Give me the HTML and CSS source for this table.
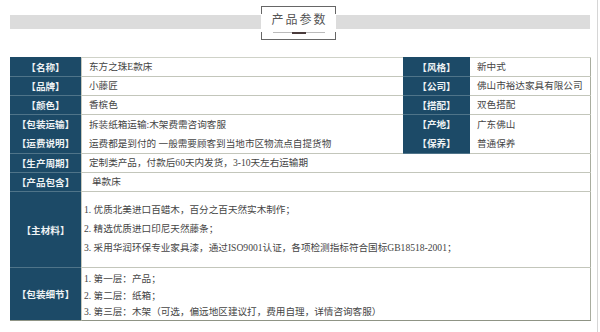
FILE: index.html
```html
<!DOCTYPE html>
<html lang="zh-CN">
<head>
<meta charset="utf-8">
<title>产品参数</title>
<link rel="stylesheet" href="styles.css">
</head>
<body>
<div class="page">
  <header class="head">
    <div class="title-box">
      <span class="title">产品参数</span>
      <span class="rule"><span class="rule-mark"></span></span>
    </div>
  </header>

  <section class="spec">
    <div class="lab r1">【名称】</div>
    <div class="val r1">东方之珠E款床</div>
    <div class="lab r1">【风格】</div>
    <div class="val r1 last">新中式</div>

    <div class="lab">【品牌】</div>
    <div class="val">小藤匠</div>
    <div class="lab">【公司】</div>
    <div class="val last">佛山市裕达家具有限公司</div>

    <div class="lab">【颜色】</div>
    <div class="val">香槟色</div>
    <div class="lab">【搭配】</div>
    <div class="val last">双色搭配</div>

    <div class="lab two"><span>【包装运输】</span><span>【运费说明】</span></div>
    <div class="val two"><span>拆装纸箱运输:木架费需咨询客服</span><span>运费都是到付的 一般需要顾客到当地市区物流点自提货物</span></div>
    <div class="lab two"><span>【产地】</span><span>【保养】</span></div>
    <div class="val two last"><span>广东佛山</span><span>普通保养</span></div>

    <div class="lab">【生产周期】</div>
    <div class="val wide">定制类产品，付款后60天内发货，3-10天左右运输期</div>

    <div class="lab">【产品包含】</div>
    <div class="val wide inset">单款床</div>

    <div class="lab">【主材料】</div>
    <div class="val wide list mat">
      <span>1. 优质北美进口百蜡木，百分之百天然实木制作；</span>
      <span>2. 精选优质进口印尼天然藤条；</span>
      <span>3. 采用华润环保专业家具漆，通过ISO9001认证，各项检测指标符合国标GB18518-2001；</span>
    </div>

    <div class="lab end">【包装细节】</div>
    <div class="val wide list pack end">
      <span>1. 第一层：产品；</span>
      <span>2. 第二层：纸箱；</span>
      <span>3. 第三层：木架（可选，偏远地区建议打，费用自理，详情咨询客服）</span>
    </div>
  </section>
</div>
</body>
</html>
```

FILE: styles.css
```css
* {
  box-sizing: border-box;
}

html,
body {
  margin: 0;
  padding: 0;
  background: #ffffff;
}

body {
  font-family: "Liberation Serif", "Noto Sans CJK SC", serif;
  color: #444444;
}

.page {
  width: 598px;
  height: 332px;
  border-right: 1px solid #d6d6d6;
}

.head {
  height: 57px;
  display: flex;
  justify-content: center;
  align-items: flex-start;
  background: linear-gradient(#dcdcdc, #dcdcdc) 10px 15px / 580px 14px no-repeat;
}

.title-box {
  position: relative;
  margin-top: 6px;
  width: 75px;
  height: 34px;
  background: #ffffff;
  display: flex;
  flex-direction: column;
  align-items: center;
  padding-top: 5px;
}

.title-box::before,
.title-box::after {
  content: "";
  position: absolute;
  left: 0;
  right: 0;
  height: 7px;
  border-left: 1px solid #666666;
  border-right: 1px solid #666666;
}

.title-box::before {
  top: 0;
  border-top: 1px solid #666666;
}

.title-box::after {
  bottom: 0;
  border-bottom: 1px solid #666666;
}

.title {
  font-family: "Noto Sans CJK SC", sans-serif;
  font-size: 12px;
  line-height: 16px;
  letter-spacing: 2px;
  padding-left: 2px;
  color: #555555;
}

.rule {
  margin-top: 5px;
  width: 52px;
  height: 1px;
  background: #bbbbbb;
  display: flex;
  justify-content: center;
  align-items: center;
}

.rule-mark {
  width: 14px;
  height: 2px;
  background: #4a3b3b;
}

.spec {
  margin-left: 10px;
  width: 581px;
  display: grid;
  grid-template-columns: 71px 322px 67px 121px;
  grid-template-rows: 20px 19px 19px 39px 19px 19px 76px 53px;
  border-right: 1px solid #a9ad9f;
  font-size: 9.6px;
}

.lab {
  background: #1c4a67;
  color: #eef2f4;
  font-family: "Noto Sans CJK SC", sans-serif;
  font-weight: 700;
  display: flex;
  flex-direction: column;
  align-items: center;
  justify-content: center;
  border-bottom: 1px solid #4f7489;
  line-height: 18px;
  white-space: nowrap;
}

.val {
  display: flex;
  flex-direction: column;
  justify-content: center;
  padding-left: 7px;
  border-left: 1px solid #c6c9be;
  border-bottom: 1px solid #c3c6bb;
  line-height: 18px;
  white-space: nowrap;
  font-family: "Liberation Serif", "Noto Sans CJK SC", serif;
  color: #454545;
}

.val.last {
  border-left: 0;
}

.val.r1 {
  border-top: 1px solid #cfd2c8;
}

.two {
  line-height: 19px;
}

.wide {
  grid-column: 2 / 5;
}

.inset {
  padding-left: 10px;
}

.list {
  padding-left: 2px;
  justify-content: flex-start;
}

.mat {
  padding-top: 8px;
  line-height: 19px;
}

.pack {
  padding-top: 3px;
  line-height: 16.5px;
}

.end {
  border-bottom: 1px solid #8f9485;
}
```
